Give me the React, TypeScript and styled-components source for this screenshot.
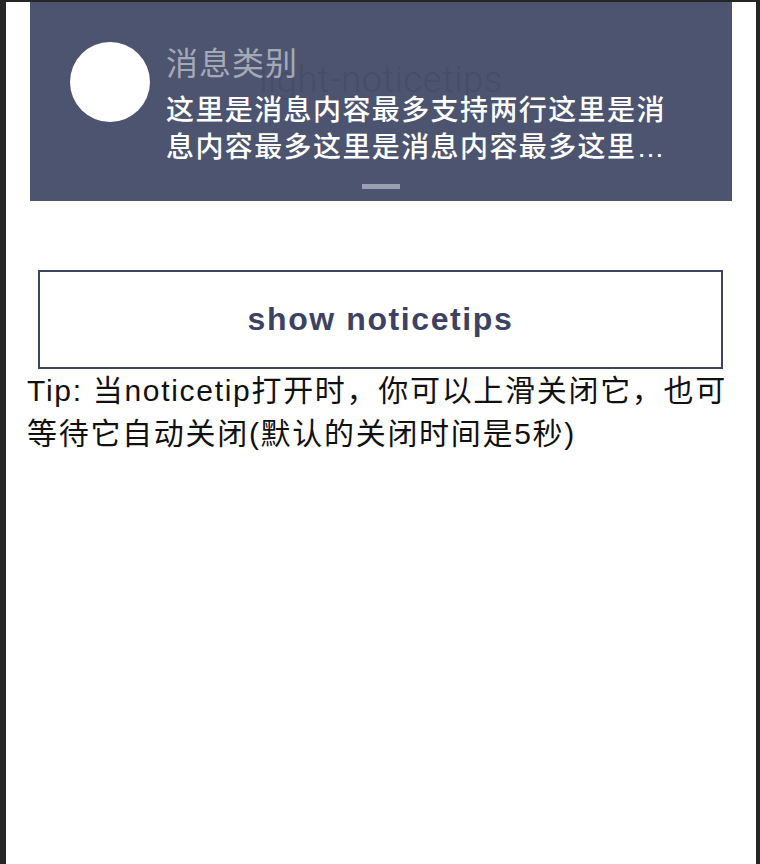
import React from 'react';
import styled, { createGlobalStyle } from 'styled-components';

const GlobalStyle = createGlobalStyle`
  html, body {
    margin: 0;
    padding: 0;
    background: #262626;
  }
  #root {
    padding: 2px 4px 0 6px;
  }
`;

const Page = styled.div`
  position: relative;
  background: #ffffff;
  min-height: 862px;
  font-family: "Liberation Sans", "Noto Sans CJK SC", sans-serif;
`;

const Header = styled.header`
  height: 156px;
  display: flex;
  align-items: center;
  justify-content: center;
`;

const HeaderTitle = styled.h1`
  margin: 0;
  font-family: Roboto, "Noto Sans CJK SC", sans-serif;
  font-weight: 300;
  font-size: 36px;
  letter-spacing: 0.7px;
  color: #d8d8d8;
`;

const Notice = styled.div`
  position: absolute;
  top: 0;
  left: 24px;
  right: 24px;
  height: 199px;
  box-sizing: border-box;
  padding: 40px 40px 12px 40px;
  background: rgba(35, 44, 77, 0.81);
  display: flex;
  flex-direction: column;
`;

const NoticeRow = styled.div`
  display: flex;
  align-items: flex-start;
  gap: 16px;
`;

const Avatar = styled.div`
  flex: none;
  width: 80px;
  height: 80px;
  border-radius: 50%;
  background: #ffffff;
`;

const NoticeBody = styled.div`
  flex: 1;
  min-width: 0;
`;

const NoticeTitle = styled.div`
  font-family: "Noto Sans CJK SC", sans-serif;
  font-size: 32px;
  line-height: 38px;
  letter-spacing: 1px;
  color: rgba(255, 255, 255, 0.5);
`;

const NoticeText = styled.div`
  margin-top: 12px;
  font-family: "Liberation Sans", "Noto Sans CJK SC", sans-serif;
  font-size: 28px;
  line-height: 37px;
  letter-spacing: 1.4px;
  font-weight: 500;
  color: #ffffff;
  display: -webkit-box;
  -webkit-line-clamp: 2;
  -webkit-box-orient: vertical;
  overflow: hidden;
`;

const Handle = styled.div`
  margin-top: auto;
  align-self: center;
  width: 38px;
  height: 5px;
  background: #9c9fb1;
`;

const Main = styled.main`
  padding-top: 112px;
`;

const ShowButton = styled.button`
  display: block;
  box-sizing: border-box;
  width: calc(100% - 65px);
  height: 99px;
  margin: 0 33px 0 32px;
  border: 2px solid #3d4463;
  background: #ffffff;
  color: #3b4263;
  font-family: "Liberation Sans", sans-serif;
  font-weight: 700;
  font-size: 32px;
  letter-spacing: 1.6px;
  cursor: pointer;
`;

const Tip = styled.p`
  margin: 0;
  padding: 0 14px 0 21px;
  font-size: 30px;
  line-height: 43px;
  letter-spacing: 1.7px;
  color: #111111;
`;

export default function App() {
  const [open, setOpen] = React.useState(true);

  return (
    <>
      <GlobalStyle />
      <Page>
        <Header>
          <HeaderTitle>light-noticetips</HeaderTitle>
        </Header>
        {open && (
          <Notice onClick={() => setOpen(false)}>
            <NoticeRow>
              <Avatar />
              <NoticeBody>
                <NoticeTitle>消息类别</NoticeTitle>
                <NoticeText>
                  这里是消息内容最多支持两行这里是消息内容最多这里是消息内容最多这里是消息内容最多这里是消息内容
                </NoticeText>
              </NoticeBody>
            </NoticeRow>
            <Handle />
          </Notice>
        )}
        <Main>
          <ShowButton onClick={() => setOpen(true)}>show noticetips</ShowButton>
          <Tip>Tip: 当noticetip打开时，你可以上滑关闭它，也可等待它自动关闭(默认的关闭时间是5秒)</Tip>
        </Main>
      </Page>
    </>
  );
}
